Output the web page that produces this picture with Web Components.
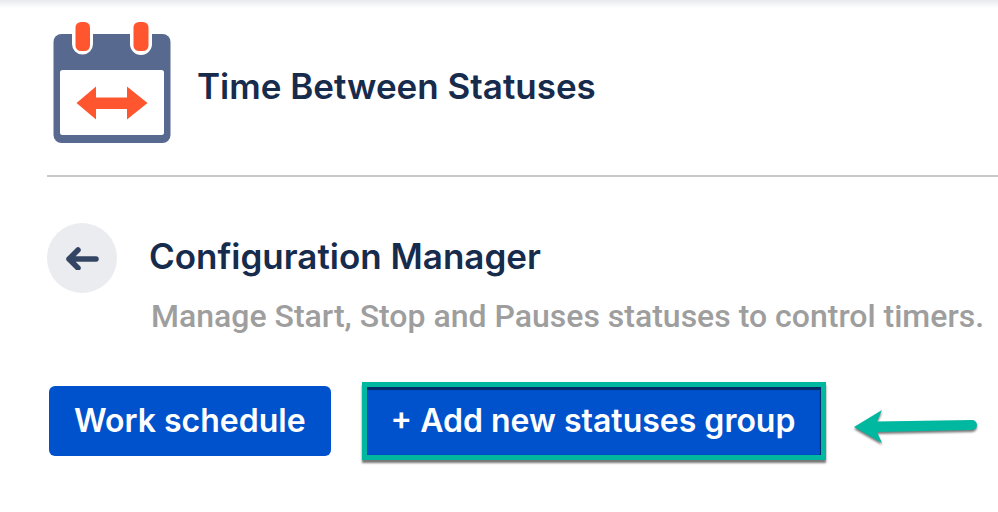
<!DOCTYPE html>
<html lang="en">
<head>
<meta charset="utf-8">
<title>Time Between Statuses</title>
<style>
  body { margin: 0; background: #fff; font-family: Inter, "Liberation Sans", sans-serif; color: #172b4d; }
</style>
</head>
<body>
<config-page>
  <app-header slot="header">Time Between Statuses</app-header>
  <page-heading>
    Configuration Manager
    <span slot="description">Manage Start, Stop and Pauses statuses to control timers.</span>
  </page-heading>
  <action-bar>
    <action-button>Work schedule</action-button>
    <action-button highlighted>+ Add new statuses group</action-button>
    <pointer-arrow></pointer-arrow>
  </action-bar>
</config-page>
<script>
  const define = (name, html) => customElements.define(name, class extends HTMLElement {
    constructor() {
      super();
      this.attachShadow({ mode: "open" }).innerHTML = html;
    }
  });

  define("calendar-logo", `
    <style>:host { display: block; flex: none; } svg { display: block; }</style>
    <svg width="118" height="122" viewBox="0 0 118 122" aria-hidden="true">
      <rect x="0.5" y="12" width="117" height="109" rx="8" fill="#57698f"/>
      <rect x="7" y="48" width="104" height="65" rx="2.500" fill="#fff"/>
      <path d="M19 11H40V22a10.500 10.500 0 0 1-21 0zM77 11H99V22a11 11 0 0 1-22 0z" fill="#fff"/>
      <rect x="22.500" y="0" width="14.500" height="29" rx="5.500" fill="#ff5630"/>
      <rect x="80.500" y="0" width="15" height="29" rx="5.500" fill="#ff5630"/>
      <path d="M23.500 81 43 64.500V75.500H74V64.500L94.500 81 74 97.500V87H43V97.500z" fill="#ff5630"/>
    </svg>`);

  define("app-header", `
    <style>
      :host { display: block; }
      header { display: flex; align-items: center; gap: 26px; padding: 0 6px 31px; border-bottom: 2px solid #c8c8c8; }
      h1 { margin: 0; padding-top: 6px; font-size: 35px; line-height: 44px; font-weight: 600; }
    </style>
    <header><calendar-logo></calendar-logo><h1><slot></slot></h1></header>`);

  define("back-button", `
    <style>
      :host { display: block; flex: none; }
      button { display: grid; place-items: center; width: 70px; height: 70px; padding: 0; border: 0; border-radius: 50%; background: #ebecf0; color: #344563; cursor: pointer; }
    </style>
    <button type="button" aria-label="Back">
      <svg width="34" height="24" viewBox="0 0 34 24" fill="none" stroke="currentColor" stroke-width="5.500" stroke-linecap="round" stroke-linejoin="round" aria-hidden="true">
        <path d="M13 4 4 13 13 22M4 13H31"/>
      </svg>
    </button>`);

  define("page-heading", `
    <style>
      :host { display: flex; align-items: flex-start; gap: 32px; }
      h2 { margin: 0; padding-top: 11px; font-size: 35px; line-height: 44px; font-weight: 600; }
      p { margin: 0; padding: 16px 0 0 2px; font: 500 32px/44px Roboto, sans-serif; color: #9e9e9e; white-space: nowrap; }
    </style>
    <back-button></back-button>
    <div><h2><slot></slot></h2><p><slot name="description"></slot></p></div>`);

  define("action-button", `
    <style>
      :host { display: block; flex: none; }
      :host([highlighted]) { margin-left: 3px; }
      button { display: block; padding: 13px 25px; border: 0; border-radius: 6px; background: #0052cc; color: #fff; font: 600 32px/44px Inter, "Liberation Sans", sans-serif; white-space: nowrap; cursor: pointer; }
      :host([highlighted]) button { padding: 12px 26px 12px 24px; border: 5px solid #00b8a0; border-radius: 0; box-shadow: 0 3px 2px #777, inset 0 3px 1px #052a66, inset -1px 0 1px #052a66; }
    </style>
    <button type="button"><slot></slot></button>`);

  define("pointer-arrow", `
    <style>
      :host { display: block; flex: none; padding-top: 12px; }
      svg { display: block; overflow: visible; filter: drop-shadow(0 2px 1px #777); }
    </style>
    <svg width="124" height="34" viewBox="0 0 124 34" aria-hidden="true">
      <path d="M0 17 28 0 23 11.500 118 10a5 5 0 0 1 0 10L23 22 28 33z" fill="#00b8a0"/>
    </svg>`);

  define("action-bar", `
    <style>:host { display: flex; align-items: center; gap: 28px; padding-left: 2px; }</style>
    <slot></slot>`);

  define("config-page", `
    <style>
      :host { display: block; background: linear-gradient(#e9eaee, #fff 8px); }
      main { display: flex; flex-direction: column; padding: 22px 0 32px 47px; }
      ::slotted(page-heading) { margin-top: 46px; }
      ::slotted(action-bar) { margin-top: 44px; }
    </style>
    <main><slot name="header"></slot><slot></slot></main>`);
</script>
</body>
</html>
